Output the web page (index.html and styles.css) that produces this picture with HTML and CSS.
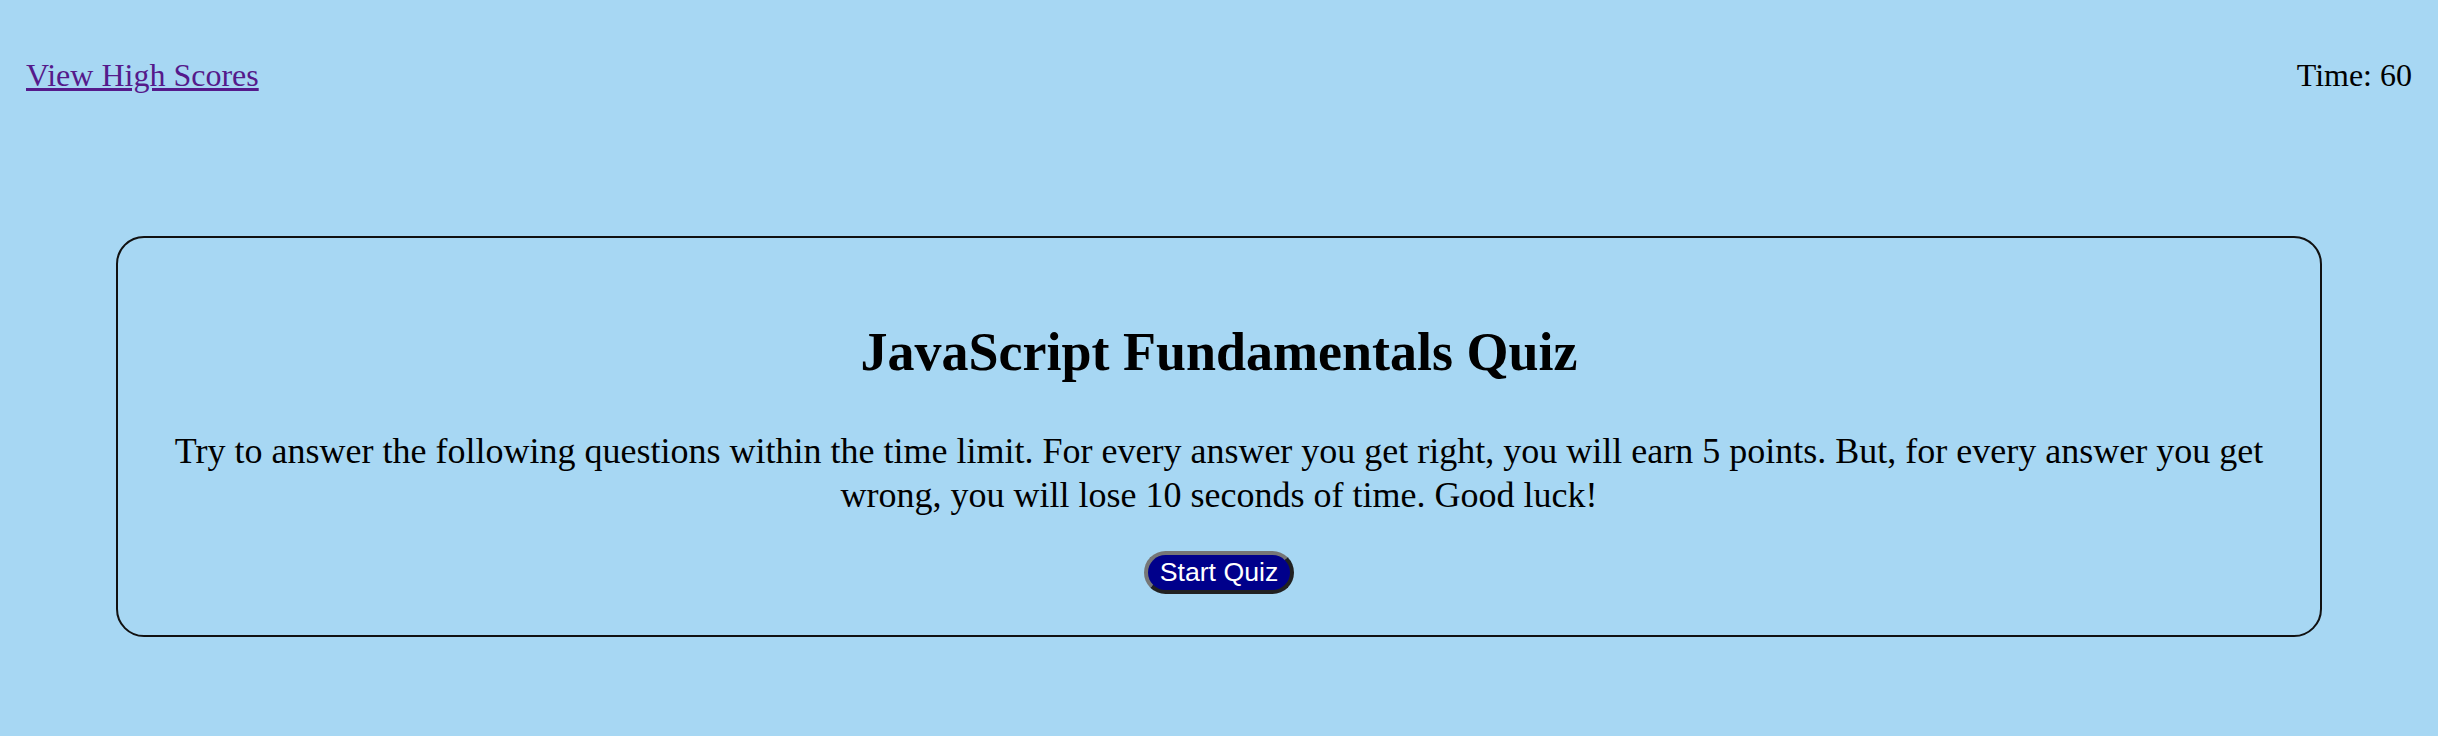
FILE: index.html
```html
<!DOCTYPE html>
<html lang="en">
<head>
<meta charset="utf-8">
<title>JavaScript Fundamentals Quiz</title>
<link rel="stylesheet" href="styles.css">
</head>
<body>
<header class="top-bar">
  <a class="scores-link" href="#">View High Scores</a>
  <div class="timer">Time: 60</div>
</header>
<main class="quiz-card">
  <h1 class="quiz-title">JavaScript Fundamentals Quiz</h1>
  <p class="quiz-intro">Try to answer the following questions within the time limit. For every answer you get right, you will earn 5 points. But, for every answer you get wrong, you will lose 10 seconds of time. Good luck!</p>
  <div class="actions">
    <button class="start-btn" type="button">Start Quiz</button>
  </div>
</main>
</body>
</html>
```
FILE: styles.css
```css
html, body {
  margin: 0;
  padding: 0;
}
body {
  background: #a7d7f3;
  font-family: "Liberation Serif", "Times New Roman", serif;
  color: #000;
  padding: 16px;
}
.top-bar {
  display: flex;
  justify-content: space-between;
  align-items: flex-start;
  padding: 41px 10px 0 10px;
  font-size: 32px;
}
.scores-link {
  color: #551a8b;
  text-decoration: underline;
}
.timer {
  color: #000;
}
.quiz-card {
  margin: 142px 100px 0 100px;
  border: 2px solid #111;
  border-radius: 28px;
  padding: 0 40px;
  text-align: center;
}
.quiz-title {
  font-size: 54px;
  font-weight: bold;
  margin: 83px 0 47px 0;
}
.quiz-intro {
  font-size: 36px;
  line-height: 43.5px;
  margin: 0 0 34px 0;
}
.actions {
  display: flex;
  justify-content: center;
  margin-bottom: 41px;
}
.start-btn {
  font-family: "Liberation Sans", Arial, sans-serif;
  font-size: 26.67px;
  color: #fff;
  background: #00008b;
  border: 4px outset #767676;
  border-radius: 24px;
  padding: 2px 12px;
}
```
